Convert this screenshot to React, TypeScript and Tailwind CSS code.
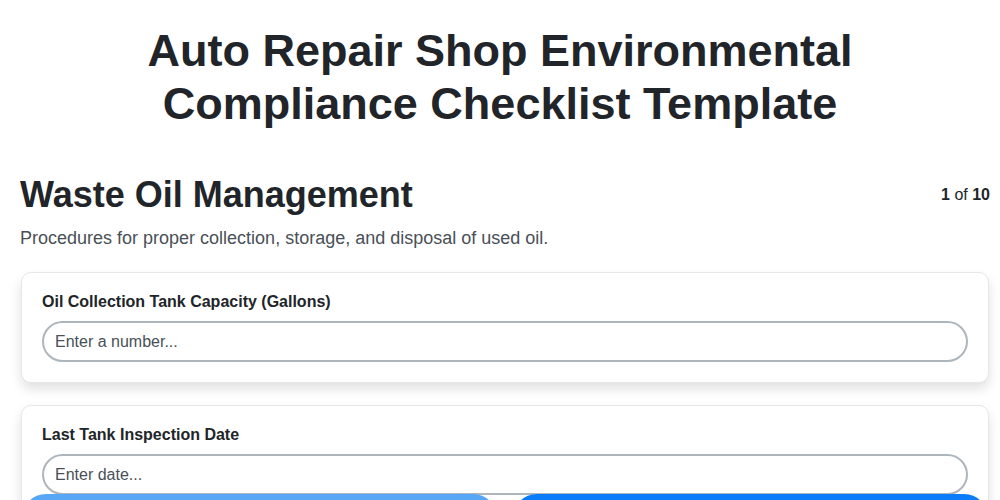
import React from 'react';

const fields = [
  { label: 'Oil Collection Tank Capacity (Gallons)', placeholder: 'Enter a number...' },
  { label: 'Last Tank Inspection Date', placeholder: 'Enter date...' },
  { label: 'Disposal Vendor Name', placeholder: 'Enter text...' },
];

const App: React.FC = () => {
  return (
    <div className="min-h-screen bg-white text-[#212529]" style={{ fontFamily: '"Liberation Sans", Arial, sans-serif' }}>
      {/* Title */}
      <h1 className="text-center font-bold text-[45px] leading-[53px] pt-[24px] mb-[43px]">
        Auto Repair Shop Environmental
        <br />
        Compliance Checklist Template
      </h1>

      <div className="pl-[21px] pr-[11px] pb-24">
        {/* Section header */}
        <div className="flex justify-between items-start">
          <h2 className="font-bold text-[36px] leading-[44px] -ml-px">Waste Oil Management</h2>
          <span className="text-[16px] mt-[10px] -mr-[1px]">
            <b>1</b> of <b>10</b>
          </span>
        </div>
        <p className="text-[18px] text-[#495057] mt-[8px] -ml-px">
          Procedures for proper collection, storage, and disposal of used oil.
        </p>

        {/* Fields */}
        <div className="mt-[20px] space-y-[22px]">
          {fields.map(f => (
            <div
              key={f.label}
              className="bg-white border border-[#e5e7eb] rounded-[10px] px-[20px] pt-[20px] pb-[20px] shadow-[0_6px_12px_rgba(0,0,0,0.12)]"
            >
              <label className="block font-bold text-[16px] leading-[18px] mb-[10px]">{f.label}</label>
              <input
                type="text"
                placeholder={f.placeholder}
                className="w-full h-[41px] rounded-full border-2 border-[#adb5bd] px-[11px] text-[16px] text-[#212529] placeholder:text-[#495057] outline-none"
              />
            </div>
          ))}
        </div>
      </div>

      {/* Footer buttons */}
      <div className="fixed left-0 right-0 top-[494px] flex gap-4 pl-[22px] pr-[12px]">
        <button className="flex-1 h-[50px] rounded-[24px] bg-[#58a7f7] text-white font-bold text-[16px]">
          Previous
        </button>
        <button className="flex-1 h-[50px] rounded-[24px] bg-[#0a7cf9] text-white font-bold text-[16px]">
          Next
        </button>
      </div>
    </div>
  );
};

export default App;
